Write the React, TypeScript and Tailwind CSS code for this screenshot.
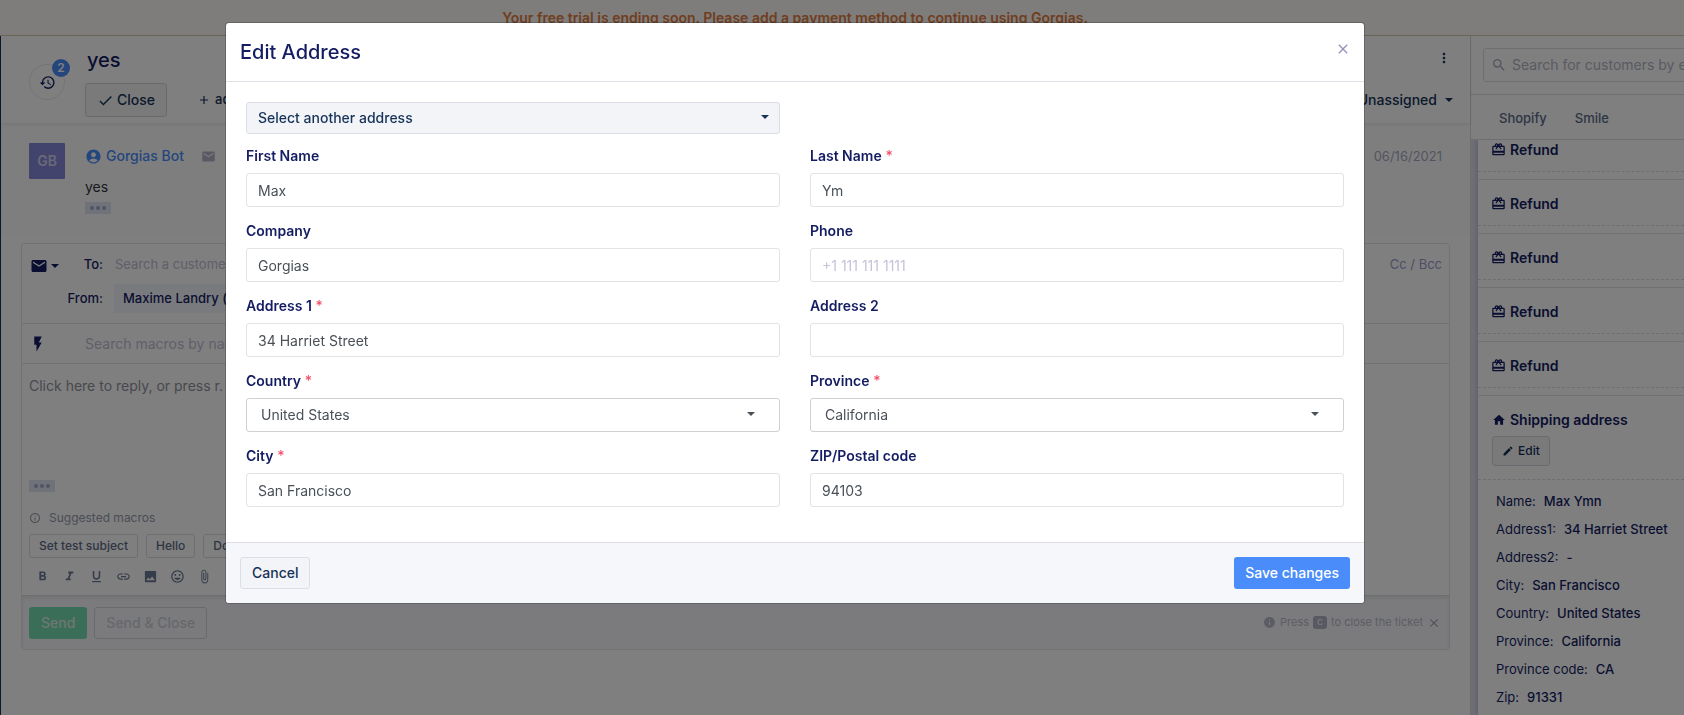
import React, { useState } from 'react';
import {
  MdAccountCircle,
  MdAdd,
  MdAttachFile,
  MdCardGiftcard,
  MdCheck,
  MdClose,
  MdEdit,
  MdEmail,
  MdFlashOn,
  MdFormatBold,
  MdFormatItalic,
  MdFormatUnderlined,
  MdHistory,
  MdHome,
  MdInfo,
  MdInfoOutline,
  MdInsertEmoticon,
  MdInsertLink,
  MdInsertPhoto,
  MdMoreVert,
  MdSearch,
} from 'react-icons/md';

const toolbar = [
  { label: 'Bold', icon: MdFormatBold },
  { label: 'Italic', icon: MdFormatItalic },
  { label: 'Underline', icon: MdFormatUnderlined },
  { label: 'Insert link', icon: MdInsertLink },
  { label: 'Insert image', icon: MdInsertPhoto },
  { label: 'Insert emoji', icon: MdInsertEmoticon },
  { label: 'Attach file', icon: MdAttachFile },
];

const shippingAddress = [
  { label: 'Name', value: 'Max Ymn' },
  { label: 'Address1', value: '34 Harriet Street' },
  { label: 'Address2', value: '-' },
  { label: 'City', value: 'San Francisco' },
  { label: 'Country', value: 'United States' },
  { label: 'Province', value: 'California' },
  { label: 'Province code', value: 'CA' },
  { label: 'Zip', value: '91331' },
];

const Caret = ({ className = '' }: { className?: string }) => (
  <svg viewBox="0 0 8 4" width="8" height="4" fill="currentColor" className={className}>
    <path d="M0 0h8L4 4z" />
  </svg>
);

const Dots = () => (
  <button aria-label="Show more" className="flex h-3 w-[26px] items-center justify-center gap-[2px] bg-[#dfe5f0]">
    <span className="h-1 w-1 rounded-full bg-[#a3a8c8]" />
    <span className="h-1 w-1 rounded-full bg-[#a3a8c8]" />
    <span className="h-1 w-1 rounded-full bg-[#a3a8c8]" />
  </button>
);

const TicketHeader = () => (
  <header className="relative z-10 flex h-[87px] shrink-0 items-start pl-7 pr-[17px] shadow-[0_1px_4px_rgba(0,0,0,0.1)]">
    <button
      aria-label="Customer history"
      className="relative mt-7 flex h-9 w-9 items-center justify-center rounded-full border border-[#e9e9ee] text-[#141d63]"
    >
      <MdHistory size={17} />
      <span className="absolute -right-[6px] -top-[6px] flex h-[18px] w-[18px] items-center justify-center rounded-full bg-[#4a8dfa] text-xs font-semibold text-white">
        2
      </span>
    </button>
    <div className="ml-5 min-w-0 flex-1 pt-3">
      <h1 className="pl-[2px] text-xl leading-6 font-medium text-[#141d63]">yes</h1>
      <div className="mt-[11px] flex items-center">
        <button className="flex h-[34px] items-center gap-[3px] rounded-[3px] border border-[#d2d5de] bg-[#f4f5f7] px-[11px] text-sm font-medium text-[#163259]">
          <MdCheck size={17} />
          Close
        </button>
        <button className="ml-[30px] flex items-center gap-1 text-[13px] font-medium text-[#163259]">
          <MdAdd size={14} />
          add tags
        </button>
      </div>
    </div>
    <div className="flex flex-col items-end">
      <button aria-label="More actions" className="mt-[14px] mr-[1px] text-[#163259]">
        <MdMoreVert size={16} />
      </button>
      <button className="mt-6 flex items-center gap-2 text-sm font-medium text-[#163259]">
        Unassigned
        <Caret />
      </button>
    </div>
  </header>
);

const Message = () => (
  <article className="flex h-[113px] shrink-0 items-start bg-[#fdfdfe] pt-5 pr-7 pl-7">
    <div className="flex h-9 w-9 items-center justify-center rounded-[1px] bg-[#8488dc] text-sm font-semibold text-[#d2d2ee]">
      GB
    </div>
    <div className="ml-5 flex-1">
      <div className="flex h-[26px] items-center">
        <MdAccountCircle size={17} className="text-[#4a8dfa]" />
        <a href="#customer" className="ml-1 text-sm font-medium text-[#4a8dfa]">Gorgias Bot</a>
        <MdEmail size={15} className="ml-[17px] text-[#b3b3c9]" />
      </div>
      <p className="mt-2 mb-[5px] text-sm text-[#30343c]">yes</p>
      <Dots />
    </div>
    <time className="mt-1 text-[13px] text-[#a9a9c2]">06/16/2021</time>
  </article>
);

const ReplyEditor = () => (
  <section className="mx-5 mt-[7px] rounded-[3px] border border-[#e4e5e9]">
    <div className="flex h-20 border-b border-[#e4e5e9] pr-[7px]">
      <button aria-label="Channel" className="mt-3 ml-2 flex h-5 items-center gap-[3px] self-start text-[#141d63]">
        <MdEmail size={18} />
        <Caret />
      </button>
      <div className="ml-1 flex-1">
        <div className="mt-[7px] flex h-7 items-center">
          <label htmlFor="to" className="w-10 text-right text-[13px] font-medium text-[#141d63]">To:</label>
          <input
            id="to"
            placeholder="Search a customer..."
            className="ml-3 flex-1 text-[13px] outline-none placeholder:text-[#c0c0d2]"
          />
          <button className="text-[13px] text-[#9a9ad0]">Cc / Bcc</button>
        </div>
        <div className="mt-[5px] flex h-[29px] items-center">
          <span className="w-10 text-right text-[13px] font-medium text-[#141d63]">From:</span>
          <button className="ml-[11px] h-[29px] bg-[#f3f5fa] px-[9px] text-[13px] font-medium text-[#141d63]">
            Maxime Landry (support)
          </button>
        </div>
      </div>
    </div>
    <div className="flex h-10 items-center border-b border-[#e4e5e9] pl-[7px]">
      <MdFlashOn size={18} className="text-[#141d63]" />
      <input
        aria-label="Search macros"
        placeholder="Search macros by name, tags or body..."
        className="ml-[38px] flex-1 text-sm outline-none placeholder:text-[#c0c0d2]"
      />
    </div>
    <div className="px-[7px] pt-3">
      <textarea
        aria-label="Reply"
        placeholder="Click here to reply, or press r."
        className="block h-[104px] w-full resize-none text-sm outline-none placeholder:text-[#8f929c]"
      />
      <Dots />
      <p className="mt-4 flex h-5 items-center gap-2 text-xs text-[#949bab]">
        <MdInfoOutline size={12} />
        Suggested macros
      </p>
      <div className="mt-[6px] flex gap-2">
        {['Set test subject', 'Hello', 'Donations'].map((macro) => (
          <button
            key={macro}
            className="h-6 rounded-[3px] border border-[#dcdde2] px-[9px] text-xs font-medium text-[#5c6b87]"
          >
            {macro}
          </button>
        ))}
      </div>
      <div className="mt-[10px] flex h-[27px] text-[#6b7894]">
        {toolbar.map(({ label, icon: Icon }) => (
          <button key={label} aria-label={label} className="flex h-4 w-[27px] items-center justify-center">
            <Icon size={15} />
          </button>
        ))}
      </div>
    </div>
    <div className="flex h-[54px] items-center justify-between border-t border-[#dcdde2] bg-[#f6f7fb] pl-[7px] pr-2 shadow-[inset_0_2px_4px_rgba(0,0,0,0.08)]">
      <div className="flex gap-[7px]">
        <button className="h-8 rounded-[3px] bg-[#74dcb2] px-3 text-sm font-medium text-[#dcefe8]">Send</button>
        <button className="h-8 rounded-[3px] border border-[#d2d5de] px-[11px] text-sm font-medium text-[#cdd0d8]">
          Send &amp; Close
        </button>
      </div>
      <div className="flex items-center gap-1 text-[11px] text-[#b9bac9]">
        <MdInfo size={13} />
        <span>Press</span>
        <kbd className="flex h-[13px] w-[14px] items-center justify-center rounded-[3px] bg-[#b3b3c6] font-mono text-[11px] text-[#f6f7fb]">
          c
        </kbd>
        <span>to close the ticket</span>
        <button aria-label="Dismiss tip" className="text-[#9fa0b5]">
          <MdClose size={14} />
        </button>
      </div>
    </div>
  </section>
);

const CustomerSidebar = () => (
  <aside className="flex w-[214px] shrink-0 flex-col overflow-hidden border-l border-[#dcdde2] whitespace-nowrap">
    <div className="h-[59px] shrink-0 border-b border-[#dcdde2] pt-3 pl-3">
      <div className="flex h-[34px] w-[300px] items-center rounded-[3px] border border-[#dcdde2] pl-[7px]">
        <MdSearch size={16} className="text-[#a9a9bd]" />
        <input
          aria-label="Search customers"
          placeholder="Search for customers by email, order number"
          className="ml-[5px] flex-1 text-sm outline-none placeholder:text-[#b4b4c4]"
        />
      </div>
    </div>
    <nav className="flex h-[45px] shrink-0 items-center gap-7 border-b border-[#dcdde2] pt-1 pl-7 text-[13px] font-medium text-[#5c6b87]">
      <a href="#shopify">Shopify</a>
      <a href="#smile">Smile</a>
    </nav>
    <div className="min-h-0 flex-1 overflow-hidden bg-[#dcdfea] pl-[7px]">
      <div className="min-h-full bg-white shadow-[0_0_5px_rgba(60,70,120,0.35)]">
        {[0, 1, 2, 3, 4].map((row) => (
          <div key={row} className={row === 0 ? 'border-b border-[#e4e5e9] pb-[7px]' : 'border-b border-[#e4e5e9] pt-[14px] pb-[7px]'}>
            <div className="flex items-start gap-1 border-b border-dashed border-[#dcdde2] pl-[13px] text-sm leading-5 font-semibold text-[#141d63]">
              <MdCardGiftcard size={15} className="mt-[2px]" />
              <span className="h-[31px]">Refund</span>
            </div>
          </div>
        ))}
        <div className="h-[84px] border-b border-dashed border-[#dcdde2] pt-[14px] pl-[14px]">
          <h2 className="flex items-center gap-1 text-sm leading-5 font-semibold text-[#141d63]">
            <MdHome size={14} />
            Shipping address
          </h2>
          <button className="mt-[6px] flex h-[30px] items-center gap-1 rounded-[3px] border border-[#d2d5de] bg-[#f4f5f7] px-[9px] text-xs font-medium text-[#163259]">
            <MdEdit size={12} />
            Edit
          </button>
        </div>
        <dl className="pt-2 pl-[18px] text-[13px] text-[#141d63]">
          {shippingAddress.map((item) => (
            <div key={item.label} className="flex h-7 items-center gap-2">
              <dt>{item.label}:</dt>
              <dd className="font-medium">{item.value}</dd>
            </div>
          ))}
        </dl>
      </div>
    </div>
  </aside>
);

type FieldProps = {
  id: string;
  label: string;
  required?: boolean;
  children: React.ReactNode;
};

const Field = ({ id, label, required, children }: FieldProps) => (
  <div>
    <label htmlFor={id} className="mb-[7px] block text-sm leading-5 font-semibold text-[#141d63]">
      {label}
      {required && <span className="font-medium text-[#f4506a]"> *</span>}
    </label>
    {children}
  </div>
);

const inputStyle =
  'block h-[34px] w-full rounded-[3px] border border-[#e2e2e7] bg-white px-[11px] text-sm text-[#495057] outline-none placeholder:text-[#c3c3da]';
const selectStyle =
  'block h-[34px] w-full appearance-none rounded-[3px] border border-[#cfd0d4] bg-white px-[14px] text-sm text-[#495057] outline-none';

const EditAddressModal = () => {
  const [address, setAddress] = useState({
    firstName: 'Max',
    lastName: 'Ym',
    company: 'Gorgias',
    phone: '',
    address1: '34 Harriet Street',
    address2: '',
    country: 'United States',
    province: 'California',
    city: 'San Francisco',
    zip: '94103',
  });

  const handleChange = (e: React.ChangeEvent<HTMLInputElement | HTMLSelectElement>) => {
    setAddress({ ...address, [e.target.id]: e.target.value });
  };

  return (
    <form
      role="dialog"
      aria-labelledby="modal-title"
      onSubmit={(e) => e.preventDefault()}
      className="w-full max-w-[1140px] self-start overflow-hidden rounded border border-black/20 bg-white bg-clip-padding"
    >
      <div className="flex h-[59px] items-start justify-between border-b border-[#dee0e6] pt-[14px] pr-[13px] pl-[14px]">
        <h2 id="modal-title" className="text-xl leading-[30px] font-medium text-[#141d63]">Edit Address</h2>
        <button type="button" aria-label="Close" className="mt-1 text-[#9394bd]">
          <MdClose size={16} />
        </button>
      </div>
      <div className="px-5 pt-5 pb-[35px]">
        <div className="mb-3 grid grid-cols-2 gap-x-[30px]">
          <div className="relative">
            <select
              aria-label="Select another address"
              className="block h-8 w-full appearance-none rounded-[3px] border border-[#dcdde6] bg-[#f3f4f7] px-[11px] text-sm font-medium text-[#163259] outline-none"
            >
              <option>Select another address</option>
            </select>
            <Caret className="pointer-events-none absolute top-[13px] right-[11px] text-[#163259]" />
          </div>
        </div>
        <div className="grid grid-cols-2 gap-x-[30px] gap-y-[14px]">
          <Field id="firstName" label="First Name">
            <input id="firstName" value={address.firstName} onChange={handleChange} className={inputStyle} />
          </Field>
          <Field id="lastName" label="Last Name" required>
            <input id="lastName" value={address.lastName} onChange={handleChange} className={inputStyle} />
          </Field>
          <Field id="company" label="Company">
            <input id="company" value={address.company} onChange={handleChange} className={inputStyle} />
          </Field>
          <Field id="phone" label="Phone">
            <input
              id="phone"
              type="tel"
              placeholder="+1 111 111 1111"
              value={address.phone}
              onChange={handleChange}
              className={inputStyle}
            />
          </Field>
          <Field id="address1" label="Address 1" required>
            <input id="address1" value={address.address1} onChange={handleChange} className={inputStyle} />
          </Field>
          <Field id="address2" label="Address 2">
            <input id="address2" value={address.address2} onChange={handleChange} className={inputStyle} />
          </Field>
          <Field id="country" label="Country" required>
            <div className="relative">
              <select id="country" value={address.country} onChange={handleChange} className={selectStyle}>
                <option>United States</option>
                <option>Canada</option>
              </select>
              <Caret className="pointer-events-none absolute top-[14px] right-[25px] text-[#495057]" />
            </div>
          </Field>
          <Field id="province" label="Province" required>
            <div className="relative">
              <select id="province" value={address.province} onChange={handleChange} className={selectStyle}>
                <option>California</option>
                <option>New York</option>
              </select>
              <Caret className="pointer-events-none absolute top-[14px] right-[25px] text-[#495057]" />
            </div>
          </Field>
          <Field id="city" label="City" required>
            <input id="city" value={address.city} onChange={handleChange} className={inputStyle} />
          </Field>
          <Field id="zip" label="ZIP/Postal code">
            <input id="zip" value={address.zip} onChange={handleChange} className={inputStyle} />
          </Field>
        </div>
      </div>
      <div className="flex justify-between border-t border-[#dee0e6] bg-[#f6f7fb] p-[14px]">
        <button
          type="button"
          className="h-8 rounded-[3px] border border-[#dcdde6] bg-[#f3f4f7] px-[11px] text-sm font-medium text-[#163259]"
        >
          Cancel
        </button>
        <button type="submit" className="h-8 rounded-[3px] bg-[#4a8dfa] px-[11px] text-sm font-medium text-white">
          Save changes
        </button>
      </div>
    </form>
  );
};

const App = () => {
  return (
    <div className="flex h-screen flex-col overflow-hidden bg-white font-['Inter',sans-serif]">
      <div className="flex h-9 shrink-0 items-center justify-center border-b border-[#d8cfa8] bg-[#fffbf7] pr-[94px] text-sm font-semibold text-[#e07c3e]">
        Your free trial is ending soon. Please add a payment method to continue using Gorgias.
      </div>
      <div className="flex min-h-0 flex-1">
        <main className="flex min-w-0 flex-1 flex-col border-l border-[#163259]">
          <TicketHeader />
          <Message />
          <ReplyEditor />
        </main>
        <CustomerSidebar />
      </div>
      <div className="fixed inset-0 z-20 flex justify-center bg-black/50 pt-[22px] pr-[94px]">
        <EditAddressModal />
      </div>
    </div>
  );
};

export default App;
